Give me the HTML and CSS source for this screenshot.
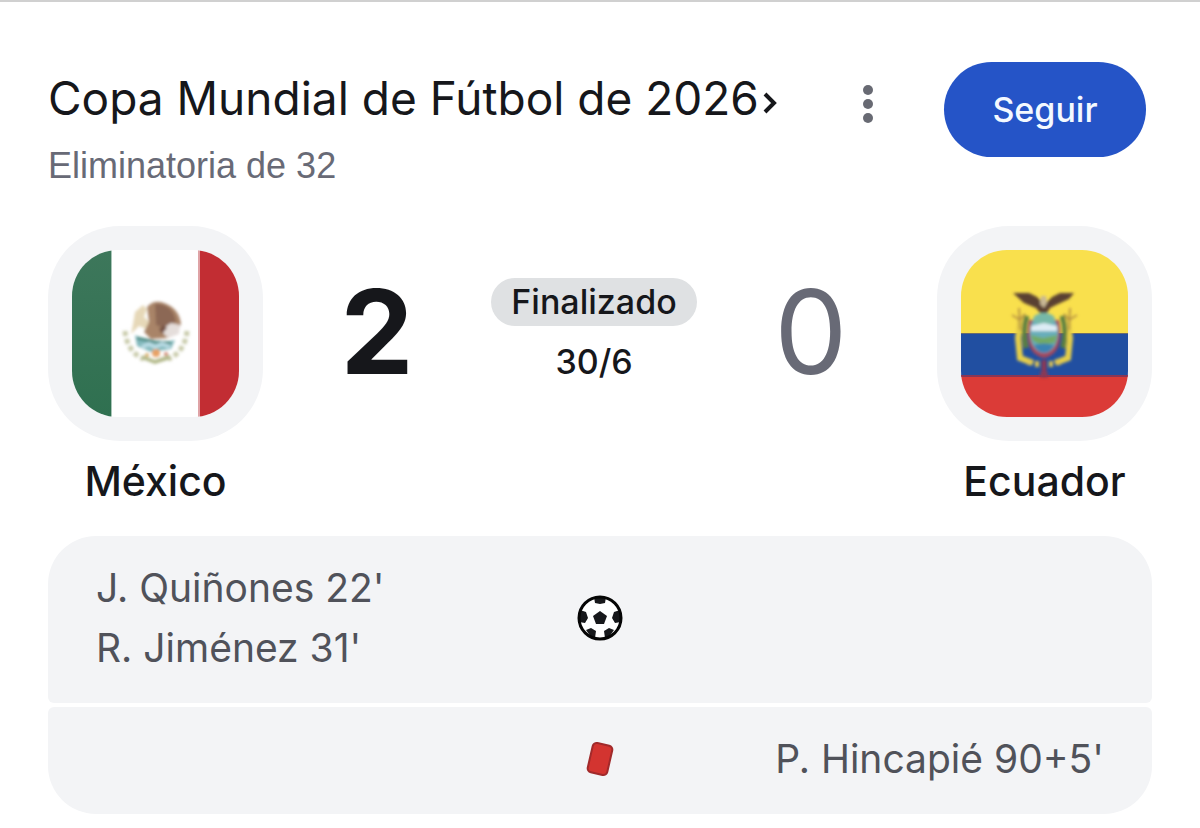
FILE: index.html
```html
<!DOCTYPE html>
<html lang="es">
<head>
    <meta charset="UTF-8" />
    <meta name="viewport" content="width=device-width, initial-scale=1.0" />
    <title>México 2 - 0 Ecuador</title>
    <link rel="stylesheet" href="styles.css">
</head>
<body>
    <main class="match">
        <header class="header">
            <div class="heading">
                <h1 class="title">
                    <a href="#">Copa Mundial de Fútbol de 2026<svg class="chevron" viewBox="0 0 14 24" aria-hidden="true"><path d="M2 3l9 9-9 9" fill="none" stroke="currentColor" stroke-width="4" /></svg></a>
                </h1>
                <p class="stage">Eliminatoria de 32</p>
            </div>
            <button class="menu-button" type="button" aria-label="Más opciones">
                <svg viewBox="0 0 10 38" aria-hidden="true">
                    <circle cx="5" cy="5" r="5" />
                    <circle cx="5" cy="19" r="5" />
                    <circle cx="5" cy="33" r="5" />
                </svg>
            </button>
            <button class="follow-button" type="button">Seguir</button>
        </header>

        <section class="scoreboard">
            <div class="team">
                <div class="crest">
                    <svg class="flag" viewBox="0 0 167 167" role="img" aria-label="Bandera de México">
                        <defs>
                            <filter id="soft" x="-20%" y="-20%" width="140%" height="140%">
                                <feGaussianBlur stdDeviation="1.5" />
                            </filter>
                            <linearGradient id="green" x1="0" y1="0" x2="0" y2="1">
                                <stop offset="0" stop-color="#3d775b" />
                                <stop offset="1" stop-color="#2f7050" />
                            </linearGradient>
                        </defs>
                        <rect width="167" height="167" fill="#fff" />
                        <rect width="39" height="167" fill="url(#green)" />
                        <rect x="39" width="1" height="167" fill="#a9c6b8" />
                        <rect x="128" width="39" height="167" fill="#c22d33" />
                        <rect x="126" width="2" height="167" fill="#dfa3a6" />
                        <g filter="url(#soft)">
                            <path d="M53 81c1 13 8 24 19 28M115 81c-1 13-8 24-19 28" fill="none" stroke="#c9cbab" stroke-width="5" stroke-dasharray="5 3" />
                            <path d="M70 107l13 5 15-5" fill="none" stroke="#b3b98a" stroke-width="4" />
                            <path d="M63 62l8-7 4 4-3 8 7 6-5 6-7-3-8 8 2-10z" fill="#e6d8b8" />
                            <path d="M75 57q7-8 17-4 15 5 17 21l-4 9-9 5-17 1-7-7 5-10z" fill="#a98468" />
                            <path d="M83 54q17-1 21 17l-9 8-11-4z" fill="#8c6854" />
                            <path d="M88 80l11-7 9 2-1 9-11 4z" fill="#e5dedb" />
                            <path d="M87 79l5-4 3 3-5 6z" fill="#765144" />
                            <path d="M63 85l10 5 20 2 10-2-4 9-20 3-14-6z" fill="#83b9bd" />
                            <path d="M65 88l18 4 16 1" fill="none" stroke="#4d8b83" stroke-width="3" />
                            <path d="M70 97l7-3 6 3 7-3 8 3" fill="none" stroke="#b9dce5" stroke-width="4" />
                            <circle cx="84" cy="103" r="4" fill="#e7a165" />
                            <circle cx="75" cy="105" r="2" fill="#d7ad68" />
                            <circle cx="94" cy="104" r="2" fill="#ce8570" />
                        </g>
                    </svg>
                </div>
                <h2 class="team-name">México</h2>
            </div>

            <div class="result">
                <span class="score winner">2</span>
                <div class="status">
                    <span class="badge">Finalizado</span>
                    <span class="date">30/6</span>
                </div>
                <span class="score">0</span>
            </div>

            <div class="team">
                <div class="crest">
                    <svg class="flag" viewBox="0 0 167 167" role="img" aria-label="Bandera de Ecuador">
                        <rect width="167" height="84" fill="#f9e04d" />
                        <rect y="83" width="167" height="43" fill="#214fa1" />
                        <rect y="125" width="167" height="42" fill="#db3b37" />
                        <rect y="83" width="167" height="1" fill="#6a6b6f" />
                        <rect y="125" width="167" height="2" fill="#8a3655" />
                        <g filter="url(#soft)">
                            <path d="M60 66l-3 22 2 20 13 5M106 66l3 22-2 20-13 5" fill="none" stroke="#e6cf49" stroke-width="6" />
                            <path d="M58 58l1 22M51 65l8 5 5-6M109 58l-1 22M116 65l-8 5-5-6" fill="none" stroke="#b99443" stroke-width="2" />
                            <path d="M66 66q-5 14-1 32M101 66q5 14 1 32" fill="none" stroke="#5b8040" stroke-width="5" />
                            <path d="M52 43l16 0 8 4 5 5 5 0 5-5 8-4 14 0-5 6-13 6-6 3-3 5-7 0-4-5-12-5z" fill="#5a4030" />
                            <path d="M80 46h5l1 7-3 5-4-4z" fill="#c8b795" />
                            <path d="M68 70q-6 34 15 38 21-4 15-38z" fill="#a4465c" />
                            <ellipse cx="83" cy="83" rx="14" ry="20" fill="#67aebb" />
                            <ellipse cx="83" cy="69" rx="11" ry="6" fill="#76b8a8" />
                            <path d="M70 76l13-3 13 3v5H70z" fill="#ddecf5" />
                            <path d="M70 85l12 3 14-3-2 8-14 2-8-4z" fill="#72aa65" />
                            <path d="M73 95q10-3 20 0-3 7-10 8-7-1-10-8z" fill="#3b83b3" />
                            <path d="M66 114l5-4M100 114l-5-4M76 117v-6M90 117v-6" stroke="#dfc452" stroke-width="4" />
                            <path d="M83 110v15M79 125h8" stroke="#8b3854" stroke-width="5" />
                        </g>
                    </svg>
                </div>
                <h2 class="team-name">Ecuador</h2>
            </div>
        </section>

        <section class="events">
            <div class="event">
                <ul class="players">
                    <li>J. Quiñones 22'</li>
                    <li>R. Jiménez 31'</li>
                </ul>
                <svg class="event-icon" viewBox="0 0 46 46" role="img" aria-label="Goles">
                    <circle cx="23" cy="23" r="21" fill="#fff" />
                    <path d="M23 16l7 5-3 8h-8l-3-8z" fill="#17181b" />
                    <path d="M17 2h12l-1 6-5 1-5-1zM3 15l6 2 2 6-3 5-6-1zM43 15l-6 2-2 6 3 5 6-1zM9 35l5-2 5 3-1 7-4-1zM37 35l-5-2-5 3 1 7 4-1z" fill="#17181b" />
                    <circle cx="23" cy="23" r="21" fill="none" stroke="#050505" stroke-width="3" />
                </svg>
                <ul class="players away"></ul>
            </div>
            <div class="event">
                <ul class="players"></ul>
                <svg class="event-icon" viewBox="0 0 46 46" role="img" aria-label="Tarjeta roja">
                    <rect x="13" y="8" width="20" height="30" rx="4" fill="#d33430" stroke="#a12a2b" stroke-width="2" transform="rotate(13 23 23)" />
                </svg>
                <ul class="players away">
                    <li>P. Hincapié 90+5'</li>
                </ul>
            </div>
        </section>
    </main>
</body>
</html>
```
FILE: styles.css
```css
* {
    box-sizing: border-box;
}

body {
    margin: 0;
    background-color: #fff;
    color: #16171b;
    font-family: Inter, "Liberation Sans", sans-serif;
}

h1,
h2,
p,
ul {
    margin: 0;
    padding: 0;
}

.match {
    border-top: 2px solid #d0d0d0;
    padding: 60px 48px 14px;
}

.header {
    display: flex;
    align-items: flex-start;
    padding-right: 6px;
}

.heading {
    flex: 1;
}

.title {
    font-size: 46px;
    font-weight: 400;
    line-height: 72px;
    white-space: nowrap;
}

.title a {
    color: inherit;
    text-decoration: none;
}

.chevron {
    width: 14px;
    height: 24px;
    margin-left: 4px;
}

.stage {
    color: #686a76;
    font-family: "Liberation Sans", sans-serif;
    font-size: 36px;
    line-height: 64px;
}

.menu-button {
    display: flex;
    justify-content: center;
    width: 48px;
    margin-right: 52px;
    padding: 23px 0;
    border: none;
    background: none;
    cursor: pointer;
}

.menu-button svg {
    width: 10px;
    height: 38px;
    fill: #686a73;
}

.follow-button {
    width: 202px;
    height: 95px;
    padding: 0;
    border: none;
    border-radius: 48px;
    background-color: #2554c7;
    color: #f4f9ff;
    font-family: inherit;
    font-size: 34px;
    font-weight: 500;
    cursor: pointer;
}

.scoreboard {
    display: flex;
    margin-top: 28px;
}

.team {
    width: 215px;
    text-align: center;
}

.crest {
    height: 215px;
    padding: 24px;
    border-radius: 72px;
    background-color: #f3f4f6;
}

.flag {
    display: block;
    width: 167px;
    height: 167px;
    border-radius: 46px;
}

.team-name {
    font-size: 41px;
    font-weight: 500;
    line-height: 80px;
}

.result {
    flex: 1;
    display: grid;
    grid-template-columns: 1fr auto 1fr;
    height: 211px;
    align-items: center;
    padding-right: 12px;
    text-align: center;
}

.score {
    color: #686a76;
    font-size: 116px;
    font-weight: 400;
    line-height: 120px;
}

.score.winner {
    color: #16171b;
    font-weight: 700;
}

.status {
    display: flex;
    flex-direction: column;
    align-items: center;
    gap: 12px;
    font-size: 34px;
    font-weight: 500;
    line-height: 48px;
}

.badge {
    padding: 0 20px;
    border-radius: 24px;
    background-color: #dfe1e3;
}

.events {
    display: flex;
    flex-direction: column;
    gap: 4px;
    margin-top: 15px;
    border-radius: 48px;
    overflow: hidden;
}

.event {
    display: grid;
    grid-template-columns: 1fr 46px 1fr;
    align-items: center;
    padding: 22px 48px 25px;
    border-radius: 6px;
    background-color: #f3f4f6;
}

.event-icon {
    width: 46px;
    height: 46px;
}

.players {
    color: #50525a;
    font-size: 39px;
    line-height: 60px;
    list-style: none;
}

.players.away {
    text-align: right;
}
```
